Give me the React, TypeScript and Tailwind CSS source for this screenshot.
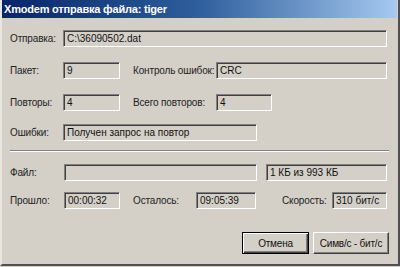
const font = { fontFamily: '"Liberation Sans", Arial, sans-serif' };

function Field({ w, children }: { w: string; children?: React.ReactNode }) {
  return (
    <div
      className={`${w} h-[17px] shrink-0 border border-t-[#808080] border-l-[#808080] border-b-white border-r-white shadow-[inset_1px_1px_0_#404040] bg-[#d4d0c8] pl-[3px] pt-[1px] text-[10px] leading-[14px] text-[#111] whitespace-nowrap overflow-hidden`}
    >
      {children}
    </div>
  );
}

function Label({ w, children }: { w: string; children: React.ReactNode }) {
  return <div className={`${w} shrink-0 text-[10px] leading-[17px] tracking-[-0.15px] text-[#222] whitespace-nowrap`}>{children}</div>;
}

function Button({ w, def, children }: { w: string; def?: boolean; children: React.ReactNode }) {
  return (
    <div
      className={`${w} h-[22px] shrink-0 flex items-center justify-center text-[10px] tracking-[-0.2px] text-[#111] bg-[#d4d0c8] ${
        def
          ? 'border border-black shadow-[inset_1px_1px_0_#fff,inset_-1px_-1px_0_#404040,inset_-2px_-2px_0_#808080]'
          : 'border border-t-white border-l-white border-b-[#404040] border-r-[#404040] shadow-[inset_-1px_-1px_0_#808080]'
      }`}
    >
      {children}
    </div>
  );
}

export default function App() {
  return (
    <div style={font} className="w-[400px] h-[267px] bg-[#d4d0c8] overflow-hidden">
      <div className="w-[400px] h-[266px] border-l-2 border-l-[#e8e6e0] border-r-2 border-r-[#505050] border-b-2 border-b-[#505050] flex flex-col">
        <div className="h-[18px] mr-[1px] bg-gradient-to-r from-[#0a246a] via-[#2f5f9c] to-[#a6caf0] flex items-center pl-[2px]">
          <span className="text-white font-bold text-[11px] leading-[14px] tracking-[-0.2px]">Xmodem отправка файла: tiger</span>
        </div>

        <div className="pl-[8px] flex flex-col">
          <div className="flex items-center mt-[12px]">
            <Label w="w-[53px]">Отправка:</Label>
            <Field w="w-[324px]">C:\36090502.dat</Field>
          </div>

          <div className="flex items-center mt-[15px]">
            <Label w="w-[53px]">Пакет:</Label>
            <Field w="w-[57px]">9</Field>
            <div className="w-[13px]" />
            <Label w="w-[83px]">Контроль ошибок:</Label>
            <Field w="w-[171px]">CRC</Field>
          </div>

          <div className="flex items-center mt-[15px]">
            <Label w="w-[53px]">Повторы:</Label>
            <Field w="w-[57px]">4</Field>
            <div className="w-[13px]" />
            <Label w="w-[83px]">Всего повторов:</Label>
            <Field w="w-[56px]">4</Field>
          </div>

          <div className="flex items-center mt-[13px]">
            <Label w="w-[53px]">Ошибки:</Label>
            <Field w="w-[194px]">Получен запрос на повтор</Field>
          </div>

          <div className="mt-[9px] w-[379px] h-[2px] border-t border-t-[#808080] border-b border-b-white" />

          <div className="flex items-center mt-[12px]">
            <Label w="w-[54px]">Файл:</Label>
            <Field w="w-[193px]" />
            <div className="w-[9px]" />
            <Field w="w-[121px]">1 КБ из 993 КБ</Field>
          </div>

          <div className="flex items-center mt-[11px]">
            <Label w="w-[54px]">Прошло:</Label>
            <Field w="w-[56px]">00:00:32</Field>
            <div className="w-[13px]" />
            <Label w="w-[63px]">Осталось:</Label>
            <Field w="w-[60px]">09:05:39</Field>
            <div className="w-[26px]" />
            <Label w="w-[50px]">Скорость:</Label>
            <Field w="w-[55px]">310 бит/с</Field>
          </div>

          <div className="flex mt-[23px] pl-[232px] gap-[4px]">
            <Button w="w-[67px]" def>
              Отмена
            </Button>
            <Button w="w-[76px]">Симв/с - бит/с</Button>
          </div>
        </div>
      </div>
    </div>
  );
}
